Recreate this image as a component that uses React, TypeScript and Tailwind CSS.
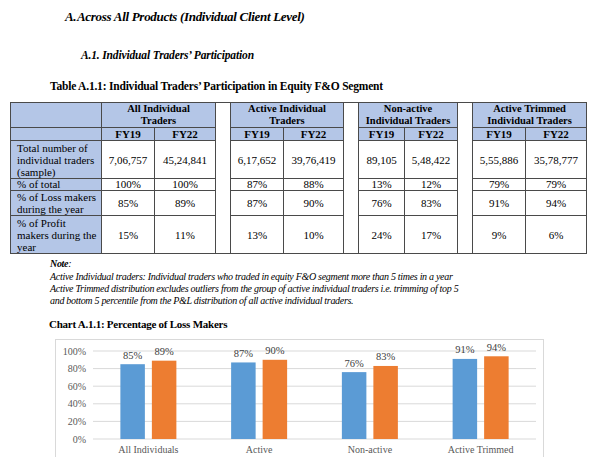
import React from 'react';

// Participation table + loss-maker chart (report page excerpt)

const groups = [
  { title: ['All Individual', 'Traders'], fy19: '7,06,757', fy22: '45,24,841', total: ['100%', '100%'], loss: ['85%', '89%'], profit: ['15%', '11%'] },
  { title: ['Active Individual', 'Traders'], fy19: '6,17,652', fy22: '39,76,419', total: ['87%', '88%'], loss: ['87%', '90%'], profit: ['13%', '10%'] },
  { title: ['Non-active', 'Individual Traders'], fy19: '89,105', fy22: '5,48,422', total: ['13%', '12%'], loss: ['76%', '83%'], profit: ['24%', '17%'] },
  { title: ['Active Trimmed', 'Individual Traders'], fy19: '5,55,886', fy22: '35,78,777', total: ['79%', '79%'], loss: ['91%', '94%'], profit: ['9%', '6%'] },
];

const colWidths = [
  [53, 61],
  [53, 60],
  [46, 53],
  [53, 61],
];

const cell = 'border border-[#4a4a4a] p-0 text-center align-middle';
const labelCell = 'border border-[#4a4a4a] bg-[#b4c6e7] py-0 pl-[6px] pr-[2px] text-left align-middle';
const headCell = 'border border-[#4a4a4a] bg-[#b4c6e7] p-0 text-center align-middle font-bold';

function ParticipationTable() {
  return (
    <table className="ml-[10px] w-[576px] table-fixed border-collapse text-[11px] leading-[12px]">
      <colgroup>
        <col style={{ width: 91 }} />
        {colWidths.map((w, i) => (
          <React.Fragment key={i}>
            {i > 0 && <col style={{ width: 15 }} />}
            <col style={{ width: w[0] }} />
            <col style={{ width: w[1] }} />
          </React.Fragment>
        ))}
      </colgroup>
      <tbody>
        <tr className="h-[25px]">
          <td className={headCell}></td>
          {groups.map((g, i) => (
            <React.Fragment key={i}>
              {i > 0 && <td rowSpan={6} className="border border-[#4a4a4a] p-0"></td>}
              <td colSpan={2} className={`${headCell} text-[10.5px] leading-[11.6px]`}>
                {g.title[0]}
                <br />
                {g.title[1]}
              </td>
            </React.Fragment>
          ))}
        </tr>
        <tr className="h-[13px]">
          <td className={headCell}></td>
          {groups.map((_, i) => (
            <React.Fragment key={i}>
              <td className={`${headCell} text-[11px] leading-[11px]`}>FY19</td>
              <td className={`${headCell} text-[11px] leading-[11px]`}>FY22</td>
            </React.Fragment>
          ))}
        </tr>
        <tr className="h-[38px]">
          <td className={labelCell}>
            Total number of
            <br />
            individual traders
            <br />
            (sample)
          </td>
          {groups.map((g, i) => (
            <React.Fragment key={i}>
              <td className={cell}>{g.fy19}</td>
              <td className={cell}>{g.fy22}</td>
            </React.Fragment>
          ))}
        </tr>
        <tr className="h-[12px] leading-[11px]">
          <td className={labelCell}>% of total</td>
          {groups.map((g, i) => (
            <React.Fragment key={i}>
              <td className={cell}>{g.total[0]}</td>
              <td className={cell}>{g.total[1]}</td>
            </React.Fragment>
          ))}
        </tr>
        <tr className="h-[25px]">
          <td className={labelCell}>
            % of Loss makers
            <br />
            during the year
          </td>
          {groups.map((g, i) => (
            <React.Fragment key={i}>
              <td className={cell}>{g.loss[0]}</td>
              <td className={cell}>{g.loss[1]}</td>
            </React.Fragment>
          ))}
        </tr>
        <tr className="h-[38px]">
          <td className={labelCell}>
            % of Profit
            <br />
            makers during the
            <br />
            year
          </td>
          {groups.map((g, i) => (
            <React.Fragment key={i}>
              <td className={cell}>{g.profit[0]}</td>
              <td className={cell}>{g.profit[1]}</td>
            </React.Fragment>
          ))}
        </tr>
      </tbody>
    </table>
  );
}

const chartData = [
  { name: 'All Individuals', a: 85, b: 89 },
  { name: 'Active', a: 87, b: 90 },
  { name: 'Non-active', a: 76, b: 83 },
  { name: 'Active Trimmed', a: 91, b: 94 },
];

function LossChart() {
  // coords relative to the chart frame (frame sits at x=55, y=338)
  const left = 37;
  const right = 480;
  const zeroY = 99;
  const scale = 0.88; // px per percent
  const step = (right - left) / chartData.length;

  return (
    <div className="ml-[55px] h-[130px] w-[489px] border border-[#d9d9d9] bg-white">
      <svg width="487" height="128" className="block" fontFamily="Liberation Serif, Times New Roman, serif">
        {[0, 20, 40, 60, 80, 100].map((v) => {
          const y = zeroY - v * scale;
          return (
            <g key={v}>
              <line x1={left} x2={right} y1={y} y2={y} stroke="#d9d9d9" strokeWidth="1" />
              <text x={30} y={y + 3.5} textAnchor="end" fontSize="10" fill="#595959">
                {v}%
              </text>
            </g>
          );
        })}
        {chartData.map((d, i) => {
          const c = left + step * (i + 0.5);
          const ha = d.a * scale;
          const hb = d.b * scale;
          return (
            <g key={d.name}>
              <rect x={c - 28} y={zeroY - ha} width={24.5} height={ha} fill="#5b9bd5" />
              <rect x={c + 3.5} y={zeroY - hb} width={24.5} height={hb} fill="#ed7d31" />
              <text x={c - 15.75} y={zeroY - ha - 5.5} textAnchor="middle" fontSize="10.5" fill="#404040">
                {d.a}%
              </text>
              <text x={c + 15.75} y={zeroY - hb - 5.5} textAnchor="middle" fontSize="10.5" fill="#404040">
                {d.b}%
              </text>
              <text x={c} y={zeroY + 14} textAnchor="middle" fontSize="10" fill="#595959">
                {d.name}
              </text>
            </g>
          );
        })}
      </svg>
    </div>
  );
}

export default function App() {
  return (
    <div className="h-[457px] w-[600px] overflow-hidden bg-white [font-family:'Liberation_Serif','Times_New_Roman',serif] text-black">
      <div className="flex h-[34px] items-center pl-[65px] text-[13px] font-bold italic tracking-[-0.3px]">
        <span className="w-[12px] shrink-0">A.</span>
        <span>Across All Products (Individual Client Level)</span>
      </div>
      <div className="flex h-[44px] items-center pl-[81px] text-[11.5px] font-bold italic tracking-[-0.15px]">
        A.1. Individual Traders’ Participation
      </div>
      <div className="flex h-[18px] items-center pl-[50px] text-[11.5px] font-bold tracking-[-0.2px]">
        Table A.1.1: Individual Traders’ Participation in Equity F&amp;O Segment
      </div>
      <div className="mt-[6px]">
        <ParticipationTable />
      </div>
      <div className="pl-[50px] text-[10px] italic tracking-[-0.3px]">
        <div className="flex h-[17px] items-center pt-[1px]">
          <span className="font-bold">Note</span>:
        </div>
        <div className="leading-[12px]">
          Active Individual traders: Individual traders who traded in equity F&amp;O segment more than 5 times in a year
          <br />
          Active Trimmed distribution excludes outliers from the group of active individual traders i.e. trimming of top 5
          <br />
          and bottom 5 percentile from the P&amp;L distribution of all active individual traders.
        </div>
      </div>
      <div className="flex h-[32px] items-center pt-[2px] pl-[49px] text-[11px] font-bold tracking-[-0.25px]">
        Chart A.1.1: Percentage of Loss Makers
      </div>
      <LossChart />
    </div>
  );
}
